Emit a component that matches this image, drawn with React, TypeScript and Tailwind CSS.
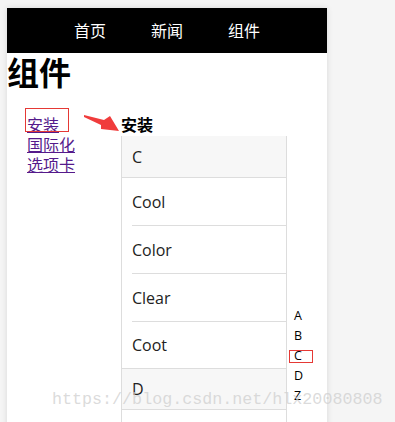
const navItems = ['首页', '新闻', '组件'];
const links = ['安装', '国际化', '选项卡'];
const groups: { letter: string; items: string[] }[] = [
  { letter: 'C', items: ['Cool', 'Color', 'Clear', 'Coot'] },
  { letter: 'D', items: ['Dog'] },
];
const indexLetters = ['A', 'B', 'C', 'D', 'Z'];

const font = { fontFamily: '"Open Sans", "Noto Sans CJK SC", sans-serif' };

export default function App() {
  return (
    <div className="relative h-[422px] w-[395px] overflow-hidden bg-[#f5f5f5] pl-[7px] pt-[8px]" style={font}>
      <div className="h-[460px] w-[320px] bg-white shadow-[0_0_6px_rgba(0,0,0,0.12)]">
        {/* top nav */}
        <div className="flex h-[45px] items-center justify-center bg-black">
          {navItems.map((n) => (
            <span key={n} className="w-[77px] text-center text-[16px] text-white">
              {n}
            </span>
          ))}
        </div>

        <h1 className="mb-[22px] text-[32px] font-bold leading-[40px] text-black">组件</h1>

        <div className="flex">
          <div className="flex w-[114px] flex-col pl-[20px]">
            {links.map((l) => (
              <a key={l} href="#" className="text-[16px] leading-[20px] text-[#551a8b] underline">
                {l}
              </a>
            ))}
          </div>

          <div className="flex-1">
            <div className="h-[21px] text-[16px] font-bold leading-[21px] text-black">安装</div>
            <div className="flex">
              <ul className="w-[166px] border-x border-[#dddddd] text-[16px] text-[#222]">
                {groups.map((g, gi) => (
                  <li key={g.letter}>
                    <div
                      className={
                        'flex h-[42px] items-center border-b border-[#dddddd] bg-[#f7f7f7] pl-[10px] ' +
                        (gi > 0 ? 'border-t' : '')
                      }
                    >
                      {g.letter}
                    </div>
                    {g.items.map((it, i) => {
                      const last = i === g.items.length - 1;
                      return (
                        <div key={it} className="pl-[10px]">
                          <div
                            className={
                              last
                                ? 'flex h-[46px] items-center'
                                : 'flex h-[48px] items-center border-b border-[#dddddd]'
                            }
                          >
                            {it}
                          </div>
                        </div>
                      );
                    })}
                  </li>
                ))}
              </ul>
              <div className="flex flex-1 flex-col pl-[2px] pt-[170px]">
                {indexLetters.map((l) => (
                  <div key={l} className="flex h-[20px] items-center">
                    <span
                      className={
                        'flex h-[13px] w-[24px] items-center pl-[4px] text-[12.5px] leading-[12px] text-black border ' +
                        (l === 'C' ? 'border-[#e53935]' : 'border-transparent')
                      }
                    >
                      {l}
                    </span>
                  </div>
                ))}
              </div>
            </div>
          </div>
        </div>
      </div>

      {/* annotation: red box + arrow */}
      <div className="absolute left-[25px] top-[108px] h-[24px] w-[44px] border border-[#e53935]" />
      <svg className="absolute left-0 top-0" width="395" height="422">
        <polygon points="84,115 104,120 110,116 119,131 101,129 101,125 84,117" fill="#f03c3c" />
      </svg>

      {/* watermark */}
      <div
        className="absolute left-[52px] top-[390px] text-[16.7px] leading-[20px] text-[#cfcfcf]/75"
        style={{ fontFamily: '"Liberation Mono", monospace' }}
      >
        https://blog.csdn.net/hlx20080808
      </div>
    </div>
  );
}
